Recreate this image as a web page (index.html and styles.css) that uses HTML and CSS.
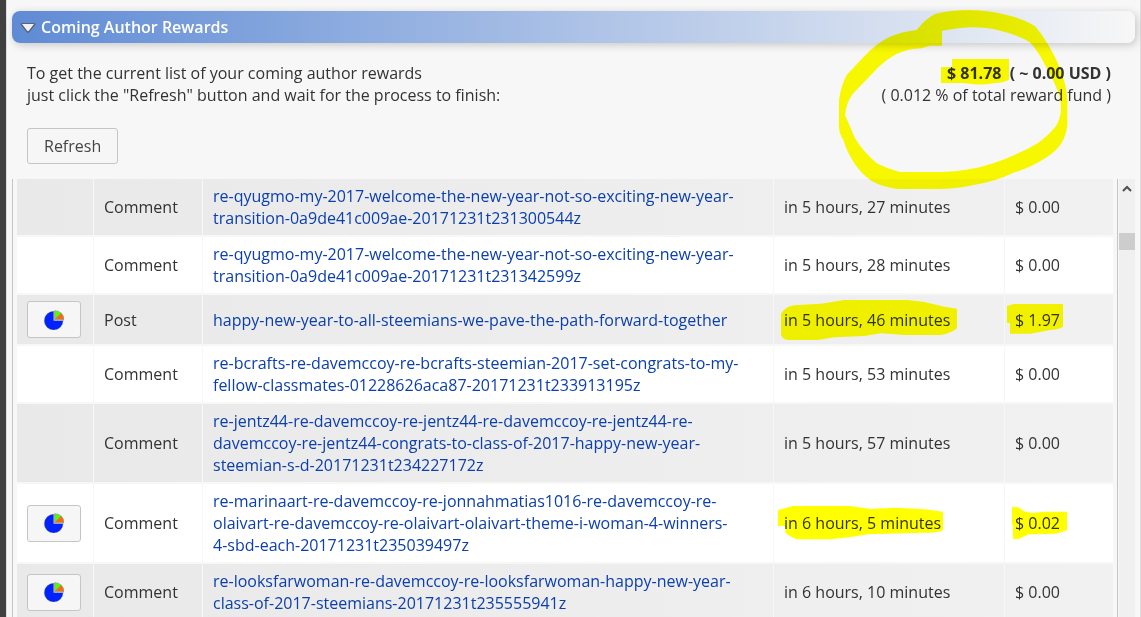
FILE: index.html
```html
<!DOCTYPE html>
<html lang="en">
  <head>
    <meta charset="UTF-8" />
    <meta name="viewport" content="width=device-width, initial-scale=1.0" />
    <title>Coming Author Rewards</title>
    <link rel="stylesheet" href="styles.css">
  </head>
  <body>
    <svg class="defs" aria-hidden="true">
      <symbol id="pie" viewBox="0 0 60 60">
        <path d="M29 32V4A28 28 0 1 0 57 32Z" fill="#0022ff" stroke="#555" stroke-width="1" />
        <path d="M32 29V2Q44 2 52 10Z" fill="#4dff00" stroke="#888" stroke-width="2" />
        <path d="M32 29L52 10Q60 18 60 29Z" fill="#ff6a00" stroke="#888" stroke-width="2" />
        <path d="M31 3V30H59" fill="none" stroke="#aaa" stroke-width="3" />
      </symbol>
    </svg>
    <main class="panel">
      <h2 class="panel-header">
        <svg class="arrow" width="16" height="14" viewBox="0 0 16 14" aria-hidden="true">
          <path d="M0.5 4.5Q0 3 2 3H14Q16 3 15.5 4.5L9.5 12Q8 14 6.5 12Z" fill="#555" fill-opacity="0.75" />
          <path d="M2 4H14L9 10.5Q8 12 7 10.5Z" fill="#f0f0f0" />
        </svg>
        Coming Author Rewards
      </h2>
      <section class="intro">
        <div>
          <p>To get the current list of your coming author rewards</p>
          <p>just click the "Refresh" button and wait for the process to finish:</p>
          <button class="refresh" type="button">Refresh</button>
        </div>
        <div class="total">
          <p><strong><span class="marked amount">$ 81.78<svg class="mark mark-total" viewBox="0 0 204 78"><path d="M0 24H33V0H204V62Q190 70 160 72Q120 80 90 74L60 72H0Z" /></svg></span> ( ~ 0.00 USD )</strong></p>
          <p>( 0.012 % of total reward fund )</p>
        </div>
      </section>
      <section class="list">
        <div class="rows">
          <table>
            <colgroup>
              <col class="col-chart" />
              <col class="col-type" />
              <col />
              <col class="col-time" />
              <col class="col-value" />
            </colgroup>
            <tbody>
              <tr>
                <td></td>
                <td>Comment</td>
                <td><a href="#">re-qyugmo-my-2017-welcome-the-new-year-not-so-exciting-new-year-transition-0a9de41c009ae-20171231t231300544z</a></td>
                <td>in 5 hours, 27 minutes</td>
                <td>$ 0.00</td>
              </tr>
              <tr>
                <td></td>
                <td>Comment</td>
                <td><a href="#">re-qyugmo-my-2017-welcome-the-new-year-not-so-exciting-new-year-transition-0a9de41c009ae-20171231t231342599z</a></td>
                <td>in 5 hours, 28 minutes</td>
                <td>$ 0.00</td>
              </tr>
              <tr>
                <td><button class="chart" type="button" aria-label="Show chart"><svg><use href="#pie" /></svg></button></td>
                <td>Post</td>
                <td><a href="#">happy-new-year-to-all-steemians-we-pave-the-path-forward-together</a></td>
                <td><span class="marked">in 5 hours, 46 minutes<svg class="mark mark-time" viewBox="0 0 528 120"><path d="M0 42Q12 20 40 16L120 11L190 0H380L430 6L490 20L528 26V84Q515 98 480 105H370L300 100L250 108L160 112L110 120H20Q6 118 0 105Z" /></svg></span></td>
                <td><span class="marked">$ 1.97<svg class="mark mark-value" viewBox="0 0 168 90"><path d="M0 6L20 0H168V68Q160 75 130 78L70 89H9V57H0Z" /></svg></span></td>
              </tr>
              <tr>
                <td></td>
                <td>Comment</td>
                <td><a href="#">re-bcrafts-re-davemccoy-re-bcrafts-steemian-2017-set-congrats-to-my-fellow-classmates-01228626aca87-20171231t233913195z</a></td>
                <td>in 5 hours, 53 minutes</td>
                <td>$ 0.00</td>
              </tr>
              <tr>
                <td></td>
                <td>Comment</td>
                <td><a href="#">re-jentz44-re-davemccoy-re-jentz44-re-davemccoy-re-jentz44-re-davemccoy-re-jentz44-congrats-to-class-of-2017-happy-new-year-steemian-s-d-20171231t234227172z</a></td>
                <td>in 5 hours, 57 minutes</td>
                <td>$ 0.00</td>
              </tr>
              <tr>
                <td><button class="chart" type="button" aria-label="Show chart"><svg><use href="#pie" /></svg></button></td>
                <td>Comment</td>
                <td><a href="#">re-marinaart-re-davemccoy-re-jonnahmatias1016-re-davemccoy-re-olaivart-re-davemccoy-re-olaivart-olaivart-theme-i-woman-4-winners-<wbr><span class="nowrap">4-sbd-each</span>-20171231t235039497z</a></td>
                <td><span class="marked">in 6 hours, 5 minutes<svg class="mark mark-time-low" viewBox="0 0 495 102"><path d="M0 12L45 0H216L280 9L350 5L440 10L495 17V72Q480 82 440 80L270 85L220 93L158 100H60Q40 96 22 80V60H0Z" /></svg></span></td>
                <td><span class="marked">$ 0.02<svg class="mark mark-value-low" viewBox="0 0 165 96"><path d="M0 0H18L36 13L60 18L100 14H165V70L150 75L130 80L50 82L20 96H3V54H0Z" /></svg></span></td>
              </tr>
              <tr>
                <td><button class="chart" type="button" aria-label="Show chart"><svg><use href="#pie" /></svg></button></td>
                <td>Comment</td>
                <td><a href="#">re-looksfarwoman-re-davemccoy-re-looksfarwoman-happy-new-year-class-of-2017-steemians-20171231t235555941z</a></td>
                <td>in 6 hours, 10 minutes</td>
                <td>$ 0.00</td>
              </tr>
            </tbody>
          </table>
        </div>
        <div class="scrollbar" aria-hidden="true">
          <svg width="16" height="17" viewBox="0 0 16 17">
            <path d="M4 11L8 7L12 11" fill="none" stroke="#505050" stroke-width="2" />
          </svg>
          <div class="thumb"></div>
        </div>
      </section>
      <svg class="circle" viewBox="0 0 1023 570" aria-hidden="true">
        <path fill-rule="evenodd" d="M117 300Q122 260 140 225L190 172Q230 128 270 110Q310 94 350 90Q375 58 405 42Q450 30 510 30Q570 31 620 45Q670 56 705 78Q728 105 745 135Q772 180 785 220Q802 265 802 310V375Q799 405 785 428Q770 452 740 472Q690 505 640 518Q590 543 520 555Q470 567 410 567H290Q245 560 215 543Q185 523 165 493Q140 455 130 420Q117 400 117 380Z
          M135 345Q138 310 158 282L225 212Q255 180 290 162Q320 147 365 145L390 137H426V93Q460 85 512 82Q560 82 600 92Q650 103 690 127Q715 155 735 195Q758 235 770 265Q783 295 783 330Q780 360 768 378Q745 407 715 428Q660 462 580 490Q510 514 425 516H300Q262 507 230 490Q190 456 165 415Q148 375 135 345Z" />
      </svg>
    </main>
  </body>
</html>
```

FILE: styles.css
```css
* {
  box-sizing: border-box;
}
body {
  margin: 0;
  height: 100vh;
  border-left: solid 6px #404040;
  background-color: #f7f7f7;
  color: #333;
  font-family: "Open Sans", "Noto Sans", sans-serif;
  font-size: 16px;
  line-height: 22px;
  overflow: hidden;
}
p {
  margin: 0;
}
.defs {
  position: absolute;
  width: 0;
  height: 0;
}

.panel {
  position: relative;
  display: flex;
  flex-direction: column;
  height: 100%;
  padding: 11px 5px 0 5px;
  border-left: solid 1px #ddd;
  border-right: solid 1px #ddd;
}
.panel-header {
  display: flex;
  align-items: center;
  gap: 5px;
  height: 32px;
  margin: 0;
  padding: 0 8px;
  border-radius: 8px;
  background: linear-gradient(to right, #5f8bd5, #f7f7f7);
  box-shadow: 2px 2px 8px rgba(0, 0, 0, 0.2);
  color: #fff;
  font-size: 16px;
  font-weight: 600;
}

.intro {
  display: flex;
  justify-content: space-between;
  padding: 19px 24px 15px 15px;
}
.total {
  text-align: right;
}
.amount {
  margin-right: 4px;
}
.refresh {
  display: block;
  height: 36px;
  margin-top: 22px;
  padding: 0 16px;
}
.refresh,
.chart {
  border: solid 1px #c5c5c5;
  border-radius: 3px;
  background-color: #f6f6f6;
  color: #454545;
  font-family: inherit;
  font-size: 16px;
}

.list {
  display: flex;
  flex: 1;
  min-height: 0;
  border-left: solid 1px #c5c5c5;
}
.rows {
  flex: 1;
  padding: 0 4px;
  border-right: solid 1px #c5c5c5;
  overflow: hidden;
}
table {
  width: 100%;
  table-layout: fixed;
  border-collapse: separate;
  border-spacing: 0;
}
.col-chart {
  width: 77px;
}
.col-type {
  width: 109px;
}
.col-time {
  width: 231px;
}
.col-value {
  width: 108px;
}
tr {
  background-color: #fff;
}
tr:nth-child(odd) {
  background: linear-gradient(to right, #e9e9e9, #f1f1f1);
}
td {
  padding: 6px 10px;
  border-right: solid 1px #f7f7f7;
  border-bottom: solid 2px #f7f7f7;
}
td:last-child {
  border-right: none;
}
a {
  color: #0b3fae;
  text-decoration: none;
}
.nowrap {
  white-space: nowrap;
}
.chart {
  display: flex;
  align-items: center;
  justify-content: center;
  width: 54px;
  height: 37px;
  padding: 0;
}
.chart svg {
  width: 20px;
  height: 20px;
}

.scrollbar {
  width: 16px;
  margin-left: 1px;
  padding-top: 1px;
  background-color: #f0f0f0;
}
.scrollbar svg {
  display: block;
}
.thumb {
  height: 17px;
  margin-top: 36px;
  background-color: #cdcdcd;
}

/* yellow marker */
.marked {
  position: relative;
}
.mark,
.circle {
  position: absolute;
  fill: #ff0;
  mix-blend-mode: multiply;
  pointer-events: none;
}
.circle {
  top: 0;
  right: -1px;
  width: 341px;
  height: 190px;
}
.mark-total {
  left: -6px;
  top: -3px;
  width: 68px;
  height: 26px;
}
.mark-time {
  left: -3px;
  top: -9px;
  width: 176px;
  height: 40px;
}
.mark-value {
  left: -8px;
  top: -5px;
  width: 56px;
  height: 30px;
}
.mark-time-low {
  left: -6px;
  top: -6px;
  width: 165px;
  height: 34px;
}
.mark-value-low {
  left: -3px;
  top: -5px;
  width: 55px;
  height: 32px;
}
```
